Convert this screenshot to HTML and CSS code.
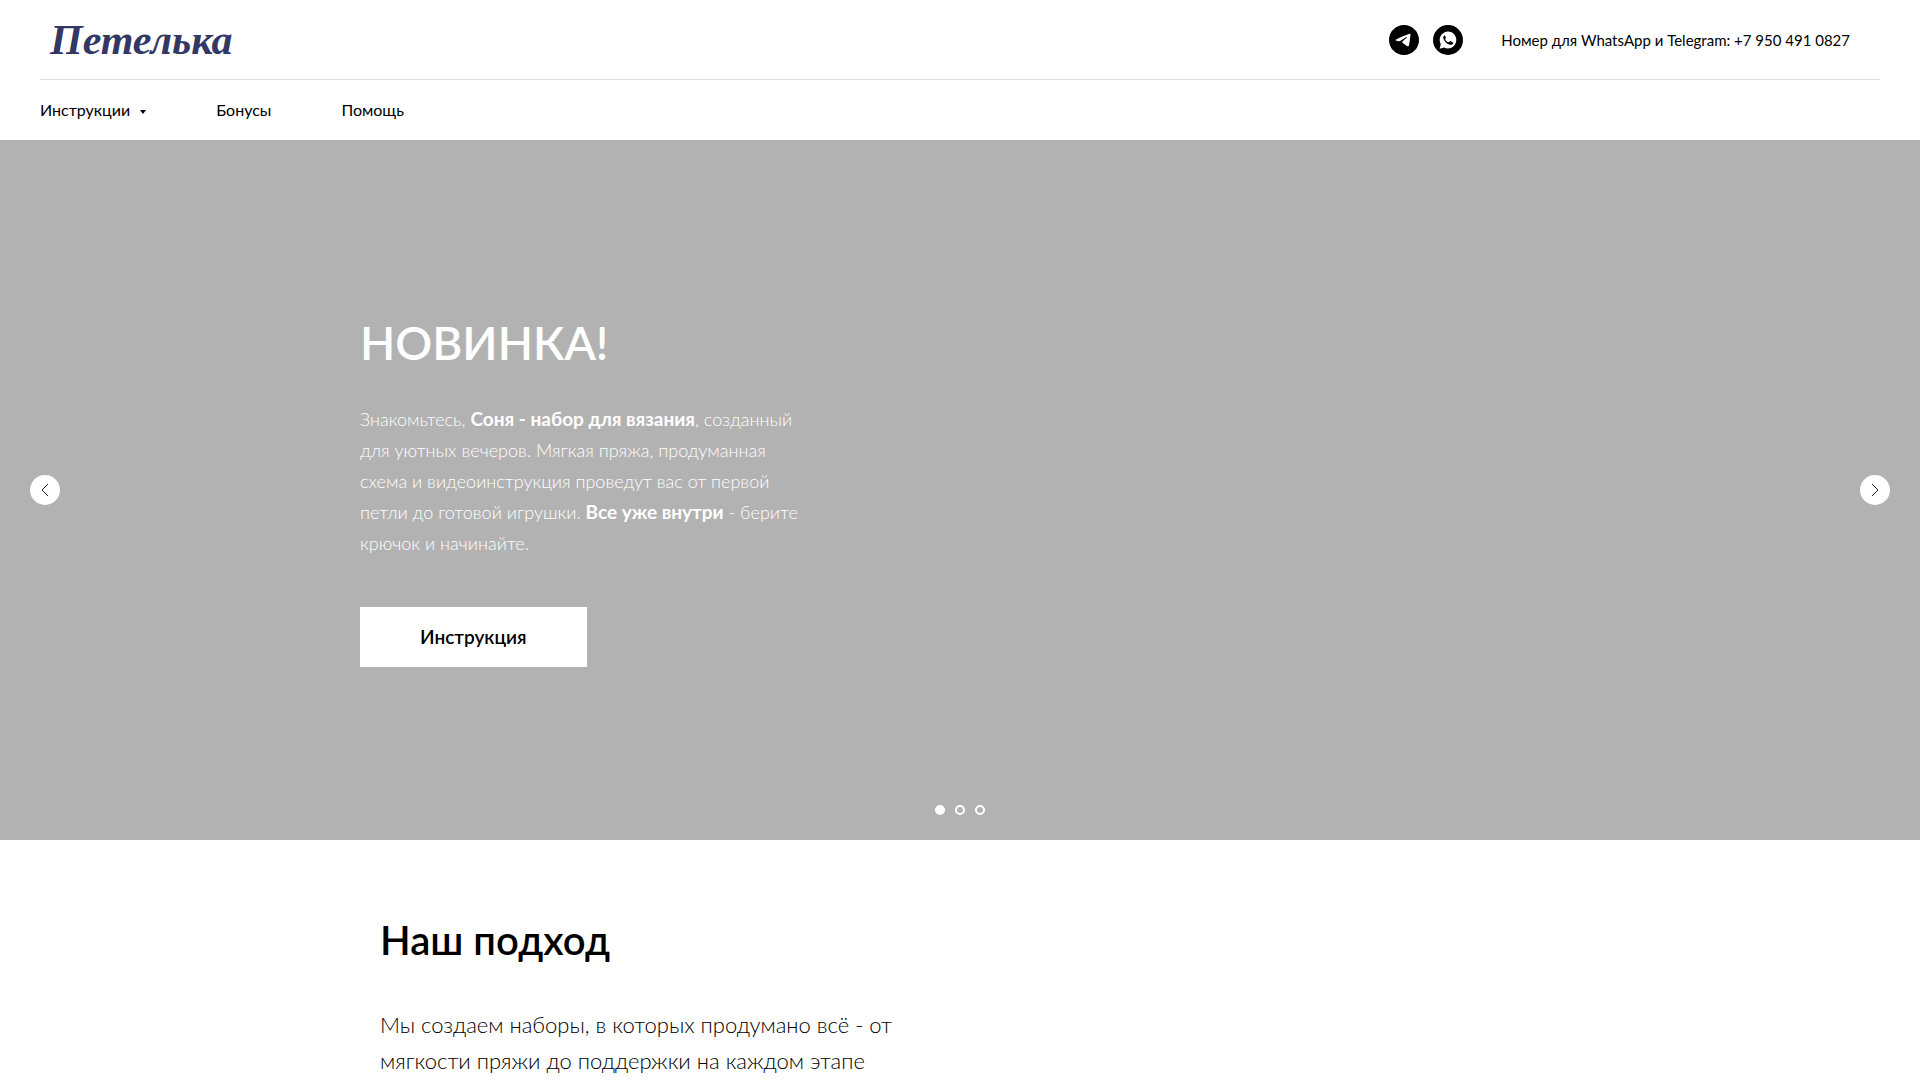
FILE: index.html
```html
<!DOCTYPE html>
<html lang="ru">
<head>
<meta charset="utf-8">
<meta name="viewport" content="width=device-width, initial-scale=1">
<title>Петелька</title>
<link rel="stylesheet" href="styles.css">
</head>
<body>
<header class="header">
  <div class="topbar">
    <a class="logo" href="#">Петелька</a>
    <div class="contacts">
      <a class="social" href="#" aria-label="Telegram">
        <svg viewBox="0 0 100 100" width="30" height="30"><path fill-rule="evenodd" d="M50 100c27.614 0 50-22.386 50-50S77.614 0 50 0 0 22.386 0 50s22.386 50 50 50Zm21.977-68.056c.386-4.38-4.24-2.576-4.24-2.576-3.415 1.414-6.937 2.85-10.497 4.302-11.04 4.503-22.444 9.155-32.159 13.734-5.268 1.932-2.184 3.864-2.184 3.864l8.351 2.577c3.855 1.16 5.91-.129 5.91-.129l17.988-12.238c6.424-4.38 4.882-.773 3.34.773l-13.49 12.882c-2.056 1.804-1.028 3.35-.129 4.123 2.55 2.249 8.82 6.364 11.557 8.16.712.467 1.185.778 1.292.858.642.515 4.111 2.834 6.424 2.319 2.313-.516 2.57-3.479 2.57-3.479l3.083-20.226c.462-3.511.993-6.886 1.417-9.582.4-2.546.705-4.485.767-5.362Z"/></svg>
      </a>
      <a class="social" href="#" aria-label="WhatsApp">
        <svg viewBox="0 0 100 100" width="30" height="30"><circle cx="50" cy="50" r="50"/><path fill="#fff" d="M50 22a28 28 0 0 0-24 42l-4 15 15-4A28 28 0 1 0 50 22Z"/><path d="M40 34c-2 0-6 3-6 8 0 6 5 12 10 17 6 5 12 8 17 7 4-1 7-4 6-8l-8-4c-2-1-3 1-5 3-1 1-2 1-4 0-4-2-8-6-9-9-1-2 1-3 2-5l-3-8Z"/></svg>
      </a>
      <p class="phone">Номер для WhatsApp и Telegram: +7 950 491 0827</p>
    </div>
  </div>
  <nav class="nav" aria-label="Главное меню">
    <a class="nav-link" href="#">Инструкции <span class="caret"></span></a>
    <a class="nav-link" href="#">Бонусы</a>
    <a class="nav-link" href="#">Помощь</a>
  </nav>
</header>
<main>
  <section class="hero">
    <button class="arrow" type="button" aria-label="Предыдущий слайд"><svg viewBox="0 0 30 30" width="30" height="30"><path d="M18 9l-6 6 6 6"/></svg></button>
    <div class="slide">
      <h1 class="slide-title">НОВИНКА!</h1>
      <p class="slide-text">Знакомьтесь, <strong>Соня - набор для вязания</strong>, созданный<br>для уютных вечеров. Мягкая пряжа, продуманная<br>схема и видеоинструкция проведут вас от первой<br>петли до готовой игрушки. <strong>Все уже внутри</strong> - берите<br>крючок и начинайте.</p>
      <a class="slide-button" href="#">Инструкция</a>
    </div>
    <button class="arrow" type="button" aria-label="Следующий слайд"><svg viewBox="0 0 30 30" width="30" height="30"><path d="M12 9l6 6-6 6"/></svg></button>
    <div class="dots">
      <button class="dot dot-active" type="button" aria-label="Слайд 1"></button>
      <button class="dot" type="button" aria-label="Слайд 2"></button>
      <button class="dot" type="button" aria-label="Слайд 3"></button>
    </div>
  </section>
  <section class="approach">
    <h2 class="approach-title">Наш подход</h2>
    <p class="approach-text">Мы создаем наборы, в которых продумано всё - от<br>мягкости пряжи до поддержки на каждом этапе</p>
  </section>
</main>
</body>
</html>
```
FILE: styles.css
```css
* { box-sizing: border-box; }

body {
  margin: 0;
  background: #fff;
  color: #000;
  font-family: Lato, "Open Sans", sans-serif;
}

h1, h2, p { margin: 0; }
a { color: inherit; text-decoration: none; }
button { padding: 0; border: 0; cursor: pointer; }

.header { padding: 0 40px; }

.topbar {
  display: flex;
  align-items: center;
  justify-content: space-between;
  height: 80px;
  padding: 0 30px 0 10px;
  border-bottom: 1px solid #e0e0e0;
}

.logo {
  color: #323863;
  font: italic 700 42px/60px "Liberation Serif", serif;
}

.contacts { display: flex; align-items: center; gap: 14px; }
.social { display: block; height: 30px; }
.social svg { display: block; }
.phone { margin-left: 24px; font-size: 15px; line-height: 24px; white-space: nowrap; }

.nav { display: flex; align-items: center; gap: 70px; height: 60px; }
.nav-link { display: flex; align-items: center; font-size: 16px; line-height: 28px; }

.caret {
  margin: 4px 0 0 10px;
  border: 3px solid transparent;
  border-top: 4px solid #000;
  border-bottom: 0;
}

.hero {
  position: relative;
  display: flex;
  align-items: center;
  justify-content: space-between;
  min-height: 700px;
  padding: 0 30px;
  background: #b2b2b2;
}

.arrow { width: 30px; height: 30px; border-radius: 50%; background: #fff; }
.arrow svg { display: block; fill: none; stroke: #222; }

.slide {
  width: 100%;
  max-width: 1200px;
  color: #fff;
}

.slide-title { font-size: 46px; font-weight: 600; line-height: 58px; }
.slide-text { margin-top: 32px; font-size: 18px; font-weight: 300; line-height: 31px; }
.slide-text strong { font-size: 19px; font-weight: 700; line-height: 30px; }

.slide-button {
  display: block;
  width: fit-content;
  margin-top: 48px;
  padding: 0 60px;
  background: #fff;
  color: #000;
  font-size: 19px;
  font-weight: 600;
  line-height: 60px;
}

.dots {
  position: absolute;
  right: 0;
  bottom: 25px;
  left: 0;
  display: flex;
  justify-content: center;
  gap: 10px;
}

.dot { width: 10px; height: 10px; border: 2px solid #fff; border-radius: 50%; background: transparent; }
.dot-active { background: #fff; }

.approach { max-width: 1160px; margin: 0 auto; padding: 74px 0 60px; }
.approach-title { font-size: 40px; font-weight: 600; line-height: 52px; }
.approach-text { margin-top: 41px; font-size: 22px; font-weight: 300; line-height: 36px; }
```
